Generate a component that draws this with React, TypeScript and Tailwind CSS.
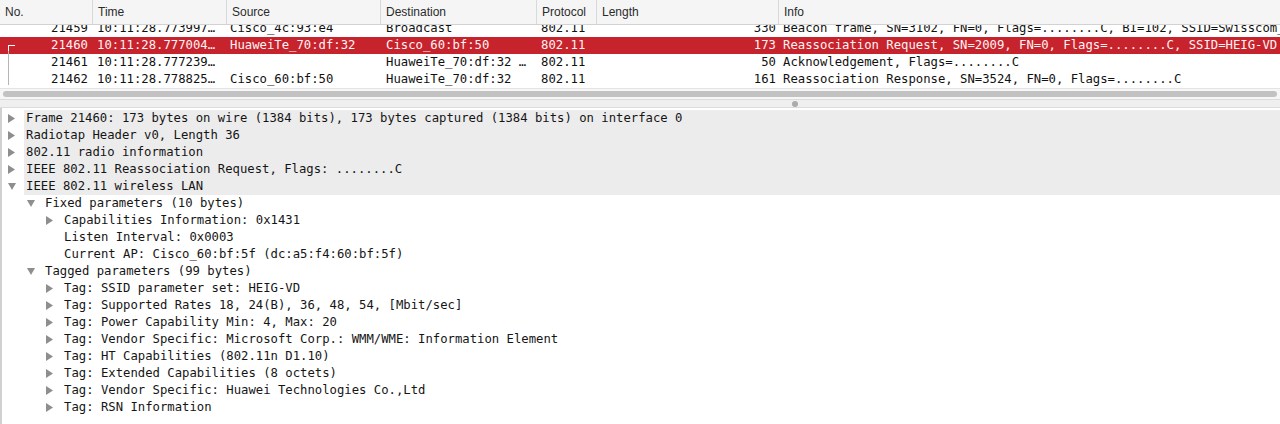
import React from "react";

type Packet = {
  no: string;
  time: string;
  source: string;
  destination: string;
  protocol: string;
  length: string;
  info: string;
  selected?: boolean;
};

const packets: Packet[] = [
  {
    no: "21459",
    time: "10:11:28.773997…",
    source: "Cisco_4c:93:e4",
    destination: "Broadcast",
    protocol: "802.11",
    length: "330",
    info: "Beacon frame, SN=3102, FN=0, Flags=........C, BI=102, SSID=Swisscom_",
  },
  {
    no: "21460",
    time: "10:11:28.777004…",
    source: "HuaweiTe_70:df:32",
    destination: "Cisco_60:bf:50",
    protocol: "802.11",
    length: "173",
    info: "Reassociation Request, SN=2009, FN=0, Flags=........C, SSID=HEIG-VD",
    selected: true,
  },
  {
    no: "21461",
    time: "10:11:28.777239…",
    source: "",
    destination: "HuaweiTe_70:df:32 …",
    protocol: "802.11",
    length: "50",
    info: "Acknowledgement, Flags=........C",
  },
  {
    no: "21462",
    time: "10:11:28.778825…",
    source: "Cisco_60:bf:50",
    destination: "HuaweiTe_70:df:32",
    protocol: "802.11",
    length: "161",
    info: "Reassociation Response, SN=3524, FN=0, Flags=........C",
  },
];

type TreeRow = { level: number; text: string; arrow?: "right" | "down" };

const details: TreeRow[] = [
  { level: 0, arrow: "right", text: "Frame 21460: 173 bytes on wire (1384 bits), 173 bytes captured (1384 bits) on interface 0" },
  { level: 0, arrow: "right", text: "Radiotap Header v0, Length 36" },
  { level: 0, arrow: "right", text: "802.11 radio information" },
  { level: 0, arrow: "right", text: "IEEE 802.11 Reassociation Request, Flags: ........C" },
  { level: 0, arrow: "down", text: "IEEE 802.11 wireless LAN" },
  { level: 1, arrow: "down", text: "Fixed parameters (10 bytes)" },
  { level: 2, arrow: "right", text: "Capabilities Information: 0x1431" },
  { level: 2, text: "Listen Interval: 0x0003" },
  { level: 2, text: "Current AP: Cisco_60:bf:5f (dc:a5:f4:60:bf:5f)" },
  { level: 1, arrow: "down", text: "Tagged parameters (99 bytes)" },
  { level: 2, arrow: "right", text: "Tag: SSID parameter set: HEIG-VD" },
  { level: 2, arrow: "right", text: "Tag: Supported Rates 18, 24(B), 36, 48, 54, [Mbit/sec]" },
  { level: 2, arrow: "right", text: "Tag: Power Capability Min: 4, Max: 20" },
  { level: 2, arrow: "right", text: "Tag: Vendor Specific: Microsoft Corp.: WMM/WME: Information Element" },
  { level: 2, arrow: "right", text: "Tag: HT Capabilities (802.11n D1.10)" },
  { level: 2, arrow: "right", text: "Tag: Extended Capabilities (8 octets)" },
  { level: 2, arrow: "right", text: "Tag: Vendor Specific: Huawei Technologies Co.,Ltd" },
  { level: 2, arrow: "right", text: "Tag: RSN Information" },
];

function Arrow({ dir }: { dir: "right" | "down" }) {
  if (dir === "right") {
    return (
      <svg width="7" height="9" viewBox="0 0 7 9">
        <path d="M0 0 L7 4.5 L0 9 Z" fill="#8e8e8e" />
      </svg>
    );
  }
  return (
    <svg width="8" height="7" viewBox="0 0 8 7">
      <path d="M0 0 L8 0 L4 7 Z" fill="#8e8e8e" />
    </svg>
  );
}

function HeaderCell({ label, w, first }: { label: string; w: string; first?: boolean }) {
  return (
    <div className={`${w} h-full flex items-center pl-[5px] ${first ? "" : "border-l border-[#d9d9d9]"}`}>
      {label}
    </div>
  );
}

function PacketRow({ p, idx }: { p: Packet; idx: number }) {
  const rowCls = p.selected ? "bg-[#c7232d] text-[#fff4f4]" : "bg-white text-[#111]";
  return (
    <div className={`flex h-[17px] items-center whitespace-nowrap ${rowCls}`}>
      <div className="w-[92px] relative text-right pr-[4px]">
        {p.selected && (
          <>
            <span className="absolute left-[8px] top-[9px] w-[7px] h-[1px] bg-white" />
            <span className="absolute left-[8px] top-[9px] w-[1px] h-[8px] bg-white" />
          </>
        )}
        {idx > 1 && <span className="absolute left-[8px] -top-[2px] w-[1px] h-[17px] bg-[#b5b5b5]" />}
        {p.no}
      </div>
      <div className="w-[134px] pl-[5px] overflow-hidden">{p.time}</div>
      <div className="w-[154px] pl-[4px] overflow-hidden">{p.source}</div>
      <div className="w-[156px] pl-[6px] overflow-hidden">{p.destination}</div>
      <div className="w-[60px] pl-[5px] overflow-hidden">{p.protocol}</div>
      <div className="w-[182px] text-right pr-[2px]">{p.length}</div>
      <div className="flex-1 pl-[5px] overflow-hidden">{p.info}</div>
    </div>
  );
}

function DetailRow({ r }: { r: TreeRow }) {
  return (
    <div className="flex h-[17px] items-stretch whitespace-nowrap">
      <div style={{ width: r.level * 19 }} className="shrink-0" />
      <div className="w-[22px] shrink-0 flex items-center justify-center pr-[3px]">
        {r.arrow && <Arrow dir={r.arrow} />}
      </div>
      <div
        className={`flex-1 flex items-center pl-[2px] ${r.level === 0 ? "bg-[#ececec]" : ""}`}
      >
        {r.text}
      </div>
    </div>
  );
}

export default function App() {
  return (
    <div className="w-[1280px] h-[424px] overflow-hidden bg-white flex flex-col">
      <div className="h-[25px] shrink-0 flex bg-[#f5f5f5] border-b border-[#d2d2d2] text-[12px] text-[#2b2b2b] font-['Liberation_Sans',Arial,sans-serif]">
        <HeaderCell label="No." w="w-[92px]" first />
        <HeaderCell label="Time" w="w-[134px]" />
        <HeaderCell label="Source" w="w-[154px]" />
        <HeaderCell label="Destination" w="w-[156px]" />
        <HeaderCell label="Protocol" w="w-[60px]" />
        <HeaderCell label="Length" w="w-[182px]" />
        <HeaderCell label="Info" w="flex-1" />
      </div>

      <div className="h-[63px] shrink-0 overflow-hidden font-['DejaVu_Sans_Mono',monospace] text-[12.25px]">
        <div className="-mt-[5px]">
          {packets.map((p, i) => (
            <PacketRow key={p.no} p={p} idx={i} />
          ))}
        </div>
      </div>

      <div className="h-[11px] shrink-0 bg-[#f6f6f6] border-t border-[#e4e4e4] flex items-center px-[3px]">
        <div className="h-[6px] w-full rounded-full bg-[#c2c2c2]" />
      </div>

      <div className="h-[9px] shrink-0 bg-[#efefef] border-t border-[#dcdcdc] border-b border-[#d6d6d6] flex items-center pl-[792px]">
        <div className="w-[6px] h-[6px] rounded-full bg-[#ababab]" />
      </div>

      <div className="flex-1 border-l-2 border-[#d0d0d0] pt-[2px] font-['DejaVu_Sans_Mono',monospace] text-[12.25px] text-[#151515]">
        {details.map((r, i) => (
          <DetailRow key={i} r={r} />
        ))}
      </div>
    </div>
  );
}
